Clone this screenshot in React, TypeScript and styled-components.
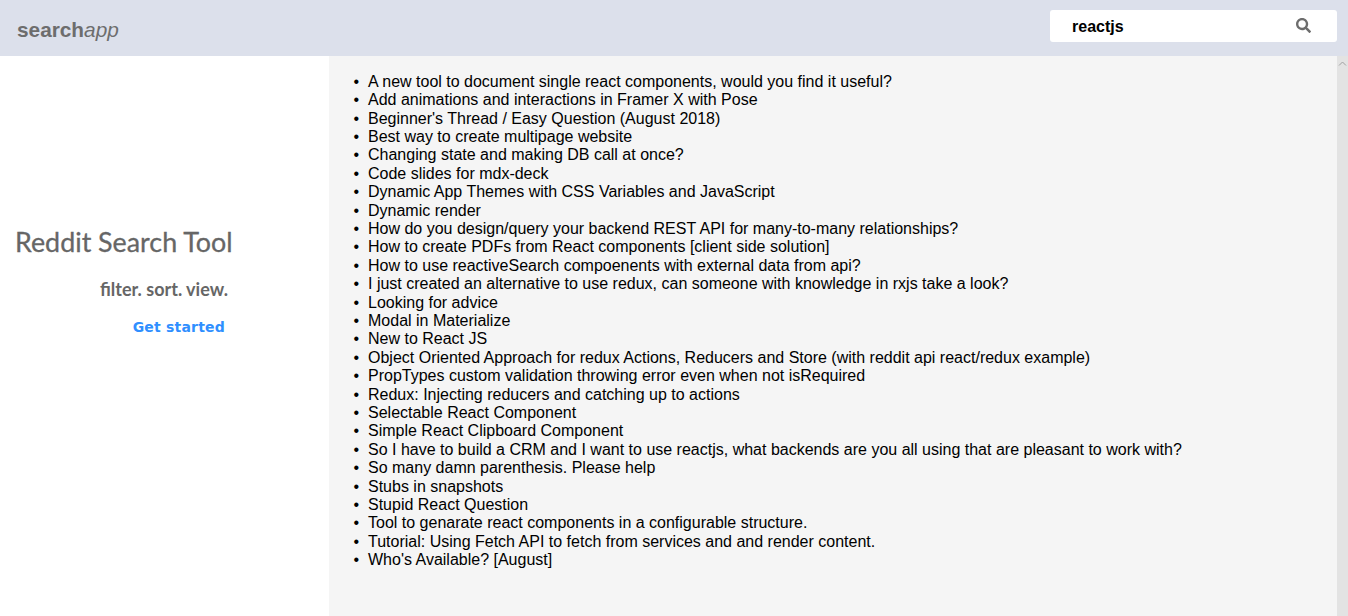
import React from "react";
import styled, { createGlobalStyle } from "styled-components";
import { FaSearch } from "react-icons/fa";

const POSTS = [
  "A new tool to document single react components, would you find it useful?",
  "Add animations and interactions in Framer X with Pose",
  "Beginner's Thread / Easy Question (August 2018)",
  "Best way to create multipage website",
  "Changing state and making DB call at once?",
  "Code slides for mdx-deck",
  "Dynamic App Themes with CSS Variables and JavaScript",
  "Dynamic render",
  "How do you design/query your backend REST API for many-to-many relationships?",
  "How to create PDFs from React components [client side solution]",
  "How to use reactiveSearch compoenents with external data from api?",
  "I just created an alternative to use redux, can someone with knowledge in rxjs take a look?",
  "Looking for advice",
  "Modal in Materialize",
  "New to React JS",
  "Object Oriented Approach for redux Actions, Reducers and Store (with reddit api react/redux example)",
  "PropTypes custom validation throwing error even when not isRequired",
  "Redux: Injecting reducers and catching up to actions",
  "Selectable React Component",
  "Simple React Clipboard Component",
  "So I have to build a CRM and I want to use reactjs, what backends are you all using that are pleasant to work with?",
  "So many damn parenthesis. Please help",
  "Stubs in snapshots",
  "Stupid React Question",
  "Tool to genarate react components in a configurable structure.",
  "Tutorial: Using Fetch API to fetch from services and and render content.",
  "Who's Available? [August]",
];

const GlobalStyle = createGlobalStyle`
  html, body {
    margin: 0;
    height: 100%;
    overflow: hidden;
    font-family: "Liberation Sans", Arial, sans-serif;
  }
`;

const Page = styled.div`
  display: flex;
  flex-direction: column;
  height: 616px;
`;

const Header = styled.header`
  flex-shrink: 0;
  height: 56px;
  box-sizing: border-box;
  padding: 10px 11px 0 17px;
  display: flex;
  justify-content: space-between;
  align-items: flex-start;
  background: #dce0eb;
`;

const Logo = styled.div`
  padding-top: 8px;
  font-size: 20.8px;
  line-height: 23px;
  font-weight: 700;
  color: #6d6d6d;

  em {
    font-weight: 400;
    font-style: italic;
  }
`;

const SearchBox = styled.div`
  width: 287px;
  height: 32px;
  box-sizing: border-box;
  padding: 2px 26px 0 22px;
  display: flex;
  align-items: center;
  justify-content: space-between;
  background: #fff;
  border-radius: 3px;
`;

const SearchText = styled.span`
  font-size: 16px;
  font-weight: 700;
  color: #000;
`;

const SearchIcon = styled(FaSearch)`
  display: block;
  width: 15px;
  height: 15px;
  margin-top: -4px;
  color: #6d6d6d;
`;

const Body = styled.div`
  flex: 1;
  min-height: 0;
  display: flex;
`;

const Sidebar = styled.aside`
  flex-shrink: 0;
  width: 329px;
  box-sizing: border-box;
  padding: 169px 101px 0 15px;
  display: flex;
  flex-direction: column;
  background: #fff;
`;

const Title = styled.h1`
  margin: 0;
  font-family: Lato, sans-serif;
  font-size: 26.85px;
  line-height: 33px;
  font-weight: 400;
  -webkit-text-stroke: 0.3px #666;
  color: #666;
  white-space: nowrap;
`;

const Tagline = styled.p`
  margin: 20px 0 0;
  font-family: Lato, sans-serif;
  font-size: 18px;
  line-height: 22px;
  font-weight: 700;
  color: #666;
  text-align: right;
  white-space: nowrap;
`;

const GetStarted = styled.a`
  margin: 19px 3px 0 0;
  font-family: "DejaVu Sans", sans-serif;
  font-size: 14px;
  line-height: 16px;
  font-weight: 700;
  letter-spacing: 0.2px;
  color: #2f8fff;
  text-align: right;
  white-space: nowrap;
`;

const Main = styled.main`
  flex: 1;
  min-width: 0;
  box-sizing: border-box;
  padding-top: 16.7px;
  background: #f5f5f5;
`;

const PostList = styled.ul`
  margin: 0;
  padding: 0 0 0 39px;
  font-size: 16px;
  line-height: 18.4px;
  color: #000;
  list-style-type: "•  ";
`;

const ScrollTrack = styled.div`
  flex-shrink: 0;
  width: 11px;
  display: flex;
  justify-content: center;
  padding-top: 5px;
  box-sizing: border-box;
  background: #e3e3e3;
`;

const ScrollArrow = styled.svg`
  display: block;
  width: 9px;
  height: 5px;
  color: #a0a0a0;
`;

export default function App() {
  return (
    <Page>
      <GlobalStyle />
      <Header>
        <Logo>
          search<em>app</em>
        </Logo>
        <SearchBox>
          <SearchText>reactjs</SearchText>
          <SearchIcon aria-hidden="true" />
        </SearchBox>
      </Header>
      <Body>
        <Sidebar>
          <Title>Reddit Search Tool</Title>
          <Tagline>filter. sort. view.</Tagline>
          <GetStarted>Get started</GetStarted>
        </Sidebar>
        <Main>
          <PostList>
            {POSTS.map((post) => (
              <li key={post}>{post}</li>
            ))}
          </PostList>
        </Main>
        <ScrollTrack>
          <ScrollArrow viewBox="0 0 9 5" fill="none" stroke="currentColor" aria-hidden="true">
            <path d="M1 4.5L4.5 1L8 4.5" strokeWidth="1" />
          </ScrollArrow>
        </ScrollTrack>
      </Body>
    </Page>
  );
}
